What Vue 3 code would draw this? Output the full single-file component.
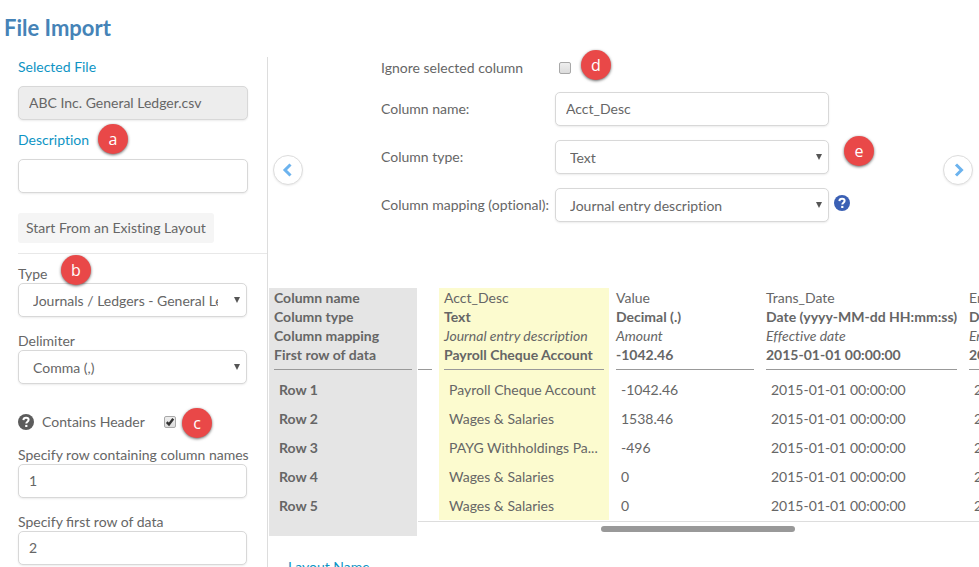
<script setup>
import { ref } from 'vue'

const fileName = ref('ABC Inc. General Ledger.csv')
const description = ref('')
const ledgerType = ref('Journals / Ledgers - General Ledger')
const delimiter = ref('Comma (,)')
const containsHeader = ref(true)
const headerRow = ref('1')
const firstDataRow = ref('2')

const ignoreColumn = ref(false)
const columnName = ref('Acct_Desc')
const columnType = ref('Text')
const columnMapping = ref('Journal entry description')

const date = '2015-01-01 00:00:00'
const columns = [
  {
    name: 'Acct_Desc',
    type: 'Text',
    mapping: 'Journal entry description',
    first: 'Payroll Cheque Account',
    selected: true,
    values: ['Payroll Cheque Account', 'Wages & Salaries', 'PAYG Withholdings Pa...', 'Wages & Salaries', 'Wages & Salaries'],
  },
  {
    name: 'Value',
    type: 'Decimal (.)',
    mapping: 'Amount',
    first: '-1042.46',
    values: ['-1042.46', '1538.46', '-496', '0', '0'],
  },
  {
    name: 'Trans_Date',
    type: 'Date (yyyy-MM-dd HH:mm:ss)',
    mapping: 'Effective date',
    first: date,
    values: [date, date, date, date, date],
  },
  {
    name: 'Entry_Date',
    type: 'Date (yyyy-MM-dd HH:mm:ss)',
    mapping: 'Entry date',
    first: date,
    values: [date, date, date, date, date],
  },
]
const rowCount = 5
</script>

<template>
  <div class="page">
    <h1>File Import</h1>
    <div class="body">
      <aside class="sidebar">
        <section class="file">
          <label class="accent" for="file">Selected File</label>
          <input id="file" v-model="fileName" class="control" type="text" disabled />
          <div class="marked">
            <label class="accent" for="description">Description</label>
            <span class="badge badge-a">a</span>
          </div>
          <input id="description" v-model="description" class="control" type="text" />
          <button class="start" type="button">Start From an Existing Layout</button>
        </section>

        <section class="settings">
          <div class="field">
            <div class="marked">
              <label for="type">Type</label>
              <span class="badge badge-b">b</span>
            </div>
            <div class="select">
              <select id="type" v-model="ledgerType" class="control">
                <option>Journals / Ledgers - General Ledger</option>
              </select>
              <svg viewBox="0 0 7 7"><path d="M0 0h7L3.5 7z" /></svg>
            </div>
          </div>
          <div class="field">
            <label for="delimiter">Delimiter</label>
            <div class="select">
              <select id="delimiter" v-model="delimiter" class="control">
                <option>Comma (,)</option>
              </select>
              <svg viewBox="0 0 7 7"><path d="M0 0h7L3.5 7z" /></svg>
            </div>
          </div>
          <div class="header-toggle">
            <svg class="help" viewBox="0 0 16 16">
              <circle cx="8" cy="8" r="8" />
              <path d="M5.4 6.1C5.5 4.6 6.5 3.7 8.1 3.7c1.5 0 2.5.8 2.5 2.1 0 1.9-2.3 1.9-2.3 3.7" />
              <rect x="7.2" y="10.9" width="2.2" height="2.1" />
            </svg>
            <label for="contains">Contains Header</label>
            <span class="check">
              <input id="contains" v-model="containsHeader" type="checkbox" />
              <svg v-if="containsHeader" viewBox="0 0 13 13"><path d="M3 6.6 5.4 9.2 10 3" /></svg>
            </span>
            <span class="badge badge-c">c</span>
          </div>
          <div class="field">
            <label for="header-row">Specify row containing column names</label>
            <input id="header-row" v-model="headerRow" class="control" type="text" />
          </div>
          <div class="field">
            <label for="data-row">Specify first row of data</label>
            <input id="data-row" v-model="firstDataRow" class="control" type="text" />
          </div>
        </section>
      </aside>

      <main>
        <section class="editor">
          <button class="arrow" type="button" aria-label="Previous column">
            <svg viewBox="0 0 16 16"><path d="M10.5 2.5 5 8l5.5 5.5" /></svg>
          </button>
          <div class="form">
            <label for="ignore">Ignore selected column</label>
            <div class="form-control toggle">
              <span class="check">
                <input id="ignore" v-model="ignoreColumn" type="checkbox" />
                <svg v-if="ignoreColumn" viewBox="0 0 13 13"><path d="M3 6.6 5.4 9.2 10 3" /></svg>
              </span>
              <span class="badge badge-d">d</span>
            </div>
            <label for="col-name">Column name:</label>
            <div class="form-control">
              <input id="col-name" v-model="columnName" class="control" type="text" />
            </div>
            <label for="col-type">Column type:</label>
            <div class="form-control select">
              <select id="col-type" v-model="columnType" class="control">
                <option>Text</option>
              </select>
              <svg viewBox="0 0 7 7"><path d="M0 0h7L3.5 7z" /></svg>
              <span class="badge badge-e">e</span>
            </div>
            <label for="col-mapping">Column mapping (optional):</label>
            <div class="form-control select">
              <select id="col-mapping" v-model="columnMapping" class="control">
                <option>Journal entry description</option>
              </select>
              <svg viewBox="0 0 7 7"><path d="M0 0h7L3.5 7z" /></svg>
            </div>
            <svg class="help help-blue" viewBox="0 0 16 16">
              <circle cx="8" cy="8" r="8" />
              <path d="M5.4 6.1C5.5 4.6 6.5 3.7 8.1 3.7c1.5 0 2.5.8 2.5 2.1 0 1.9-2.3 1.9-2.3 3.7" />
              <rect x="7.2" y="10.9" width="2.2" height="2.1" />
            </svg>
          </div>
          <button class="arrow" type="button" aria-label="Next column">
            <svg viewBox="0 0 16 16"><path d="M6 2.5 11.5 8 6 13.5" /></svg>
          </button>
        </section>

        <section class="preview">
          <table class="row-names">
            <thead>
              <tr>
                <th>
                  <div class="head">
                    <div>Column name</div>
                    <div>Column type</div>
                    <div>Column mapping</div>
                    <div>First row of data</div>
                  </div>
                </th>
              </tr>
            </thead>
            <tbody>
              <tr v-for="n in rowCount" :key="n"><th>Row {{ n }}</th></tr>
            </tbody>
          </table>
          <div class="data">
            <div class="viewport">
              <table class="columns">
                <colgroup>
                  <col class="w-cut" /><col class="w-text" /><col class="w-value" /><col class="w-date" /><col class="w-date" />
                </colgroup>
                <thead>
                  <tr>
                    <td class="cut"><div class="head"></div></td>
                    <th v-for="c in columns" :key="c.name" :class="{ selected: c.selected }">
                      <div class="head">
                        <div class="plain">{{ c.name }}</div>
                        <div>{{ c.type }}</div>
                        <div class="mapping">{{ c.mapping }}</div>
                        <div>{{ c.first }}</div>
                      </div>
                    </th>
                  </tr>
                </thead>
                <tbody>
                  <tr v-for="n in rowCount" :key="n">
                    <td></td>
                    <td v-for="c in columns" :key="c.name" :class="{ selected: c.selected }">{{ c.values[n - 1] }}</td>
                  </tr>
                </tbody>
              </table>
            </div>
            <div class="scrollbar"><div class="thumb"></div></div>
          </div>
        </section>

        <div class="layout-name accent">Layout Name</div>
      </main>
    </div>
  </div>
</template>

<style>
body {
  background: #fff;
}
</style>

<style scoped>
.page {
  box-sizing: border-box;
  display: flex;
  flex-direction: column;
  height: 100vh;
  overflow: hidden;
  color: #666;
  font: 14px/19px Lato, "Liberation Sans", sans-serif;
  font-variant-ligatures: no-common-ligatures;
}
*, *::before, *::after {
  box-sizing: border-box;
}
h1 {
  flex: none;
  margin: 0;
  padding: 14px 4px 15px;
  color: #4583b7;
  font-size: 22px;
  line-height: 28px;
  font-weight: 700;
}
.body {
  display: flex;
  flex: 1;
  min-height: 0;
}
.sidebar {
  flex: none;
  width: 268px;
  border-right: 1px solid #ddd;
  padding-left: 18px;
}
.file {
  display: flex;
  flex-direction: column;
  gap: 10px;
  padding-bottom: 10px;
  border-bottom: 1px solid #e8e8e8;
  margin-bottom: 10px;
}
.file > .control {
  flex: none;
  width: calc(100% - 19px);
}
.settings {
  padding-right: 20px;
}
.accent {
  color: #0e94c4;
}
label {
  display: block;
  white-space: nowrap;
}
.field label {
  font-variant-ligatures: normal;
}
.marked {
  position: relative;
}
.control {
  display: block;
  width: 100%;
  height: 34px;
  margin: 0;
  padding: 0 10px 2px;
  border: 1px solid #d8d8d8;
  border-radius: 5px;
  background: #fff;
  box-shadow: 0 1px 2px rgba(0, 0, 0, 0.08);
  color: #666;
  font: inherit;
  font-variant-ligatures: inherit;
  outline: none;
}
.control:disabled {
  background: #ededed;
}
.select {
  position: relative;
}
select.control {
  appearance: none;
  padding: 0 28px 0 14px;
}
.select svg {
  position: absolute;
  top: 14px;
  right: 7px;
  width: 6px;
  height: 6px;
  fill: #555;
  pointer-events: none;
}
.start {
  align-self: flex-start;
  height: 30px;
  margin-top: 10px;
  padding: 0 8px 2px;
  border: 0;
  border-radius: 3px;
  background: #f5f5f5;
  color: #666;
  font: inherit;
}
.field {
  margin-bottom: 14px;
}
.header-toggle {
  position: relative;
  display: flex;
  align-items: center;
  height: 20px;
  margin: 28px 0 13px;
}
.header-toggle label {
  margin: 0 19px 1px 8px;
}
.help {
  flex: none;
  width: 16px;
  height: 16px;
  fill: #5c5c5c;
}
.help path {
  fill: none;
  stroke: #fff;
  stroke-width: 2;
}
.help rect {
  fill: #fff;
}
.help-blue {
  fill: #3b60b4;
}
.check {
  position: relative;
  display: block;
  width: 12px;
  height: 12px;
}
.check input {
  display: block;
  appearance: none;
  width: 12px;
  height: 12px;
  margin: 0;
  border: 1px solid #a8a8a8;
  border-radius: 2px;
  background: linear-gradient(#eee, #dcdcdc);
}
.check svg {
  position: absolute;
  inset: 0;
  width: 12px;
  height: 12px;
  fill: none;
  stroke: #333;
  stroke-width: 2.6;
  pointer-events: none;
}
.badge {
  position: absolute;
  z-index: 1;
  width: 30px;
  height: 30px;
  border-radius: 50%;
  background: #e94848;
  box-shadow: 0 1px 3px rgba(0, 0, 0, 0.6);
  color: #fff;
  font: 16px/30px "Open Sans", sans-serif;
  text-align: center;
}
.badge-a {
  left: 80px;
  top: -6px;
}
.badge-b {
  left: 43px;
  top: -9px;
}
.badge-c {
  left: 164px;
  top: -4px;
}
.badge-d {
  left: 26px;
  top: -8px;
}
.badge-e {
  left: 289px;
  top: -4px;
}
main {
  flex: 1;
  min-width: 0;
  padding-left: 1px;
}
.editor {
  display: flex;
  align-items: center;
  justify-content: space-between;
  height: 226px;
  margin-bottom: 5px;
  padding: 0 6px 0 4px;
}
.arrow {
  display: flex;
  flex: none;
  align-items: center;
  justify-content: center;
  width: 30px;
  height: 30px;
  padding: 0;
  border: 1px solid #ddd;
  border-radius: 50%;
  background: #fff;
  box-shadow: 0 1px 2px rgba(0, 0, 0, 0.08);
}
.arrow svg {
  width: 16px;
  height: 16px;
  fill: none;
  stroke: #6cb3ee;
  stroke-width: 3;
}
.form {
  display: grid;
  grid-template-columns: 174px 274px 16px;
  align-items: center;
  align-self: flex-start;
  row-gap: 14px;
  margin-top: 1px;
  margin-right: 20px;
}
.form label {
  grid-column: 1;
  padding-bottom: 1px;
}
.form-control {
  grid-column: 2;
}
.toggle {
  position: relative;
  display: flex;
  align-items: center;
  height: 20px;
  padding-left: 4px;
}
.form .help {
  margin: 0 0 4px 5px;
}
.preview {
  display: flex;
  align-items: stretch;
  height: 248px;
}
table {
  border-spacing: 0;
  text-align: left;
}
th, td {
  padding: 0 10px;
  white-space: nowrap;
}
tbody th, tbody td {
  height: 29px;
}
thead th, thead td {
  padding: 0 5px 5px;
}
.head {
  height: 82px;
  border-bottom: 1px solid #999;
}
.row-names {
  display: block;
  flex: none;
  width: 148px;
  background: #e5e5e5;
}
.row-names thead, .row-names tbody, .row-names tr, .row-names th {
  display: block;
}
.row-names tbody th {
  padding-top: 5px;
}
.data {
  flex: 1;
  min-width: 0;
  margin-left: 1px;
}
.viewport {
  overflow: hidden;
  padding-bottom: 1px;
  border-bottom: 1px solid #ddd;
}
.columns {
  width: 749px;
  table-layout: fixed;
}
.columns th, .columns td {
  border-right: 2px solid #fff;
}
.w-cut {
  width: 21px;
}
.w-text {
  width: 172px;
}
.w-value {
  width: 150px;
}
.w-date {
  width: 203px;
}
.columns .cut {
  padding-left: 0;
}
.selected {
  background: #fcfbcf;
}
.plain {
  font-weight: 400;
}
.mapping {
  font-weight: 400;
  font-style: italic;
}
.scrollbar {
  padding: 4px 0 0 183px;
}
.thumb {
  width: 194px;
  height: 6px;
  border-radius: 3px;
  background: #999;
}
.layout-name {
  padding: 21px 19px 0;
}
</style>
